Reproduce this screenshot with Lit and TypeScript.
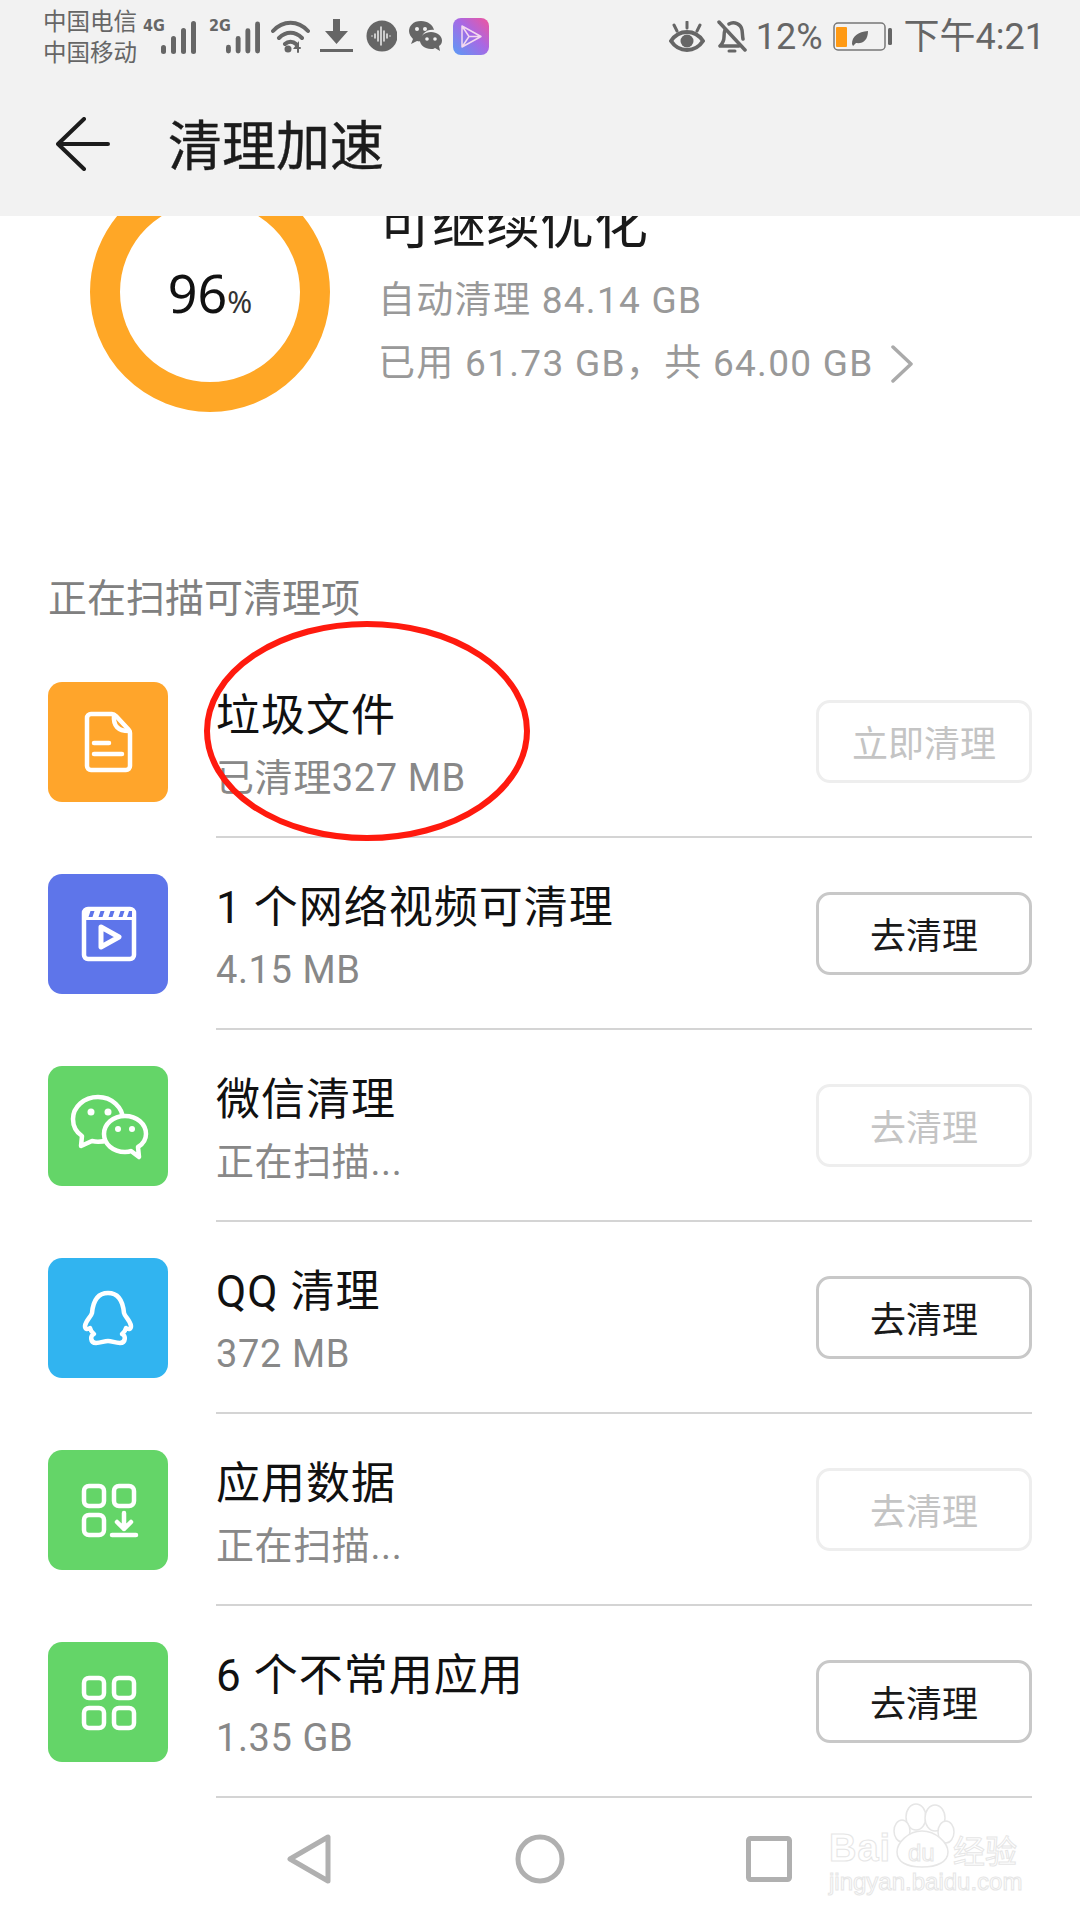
import {LitElement, html, svg, css} from 'lit';
import {customElement} from 'lit/decorators.js';

const signal = svg`<rect x="0" y="24" width="5" height="9" rx="2.5"/><rect x="10" y="15" width="5" height="18" rx="2.5"/><rect x="20" y="7" width="5" height="26" rx="2.5"/><rect x="30" y="0" width="5" height="33" rx="2.5"/>`;

const docIcon = svg`
	<path d="M43 32h21c2 0 3 1 4 2l13 14c1 1 1 2 1 3v33a4 4 0 0 1-4 4H43a4 4 0 0 1-4-4V36a4 4 0 0 1 4-4z"/>
	<path d="M66 33c-1 11 4 16 15 16"/>
	<path d="M46 61h15M46 72h28"/>`;

const videoIcon = svg`
	<rect x="36" y="35" width="50" height="50" rx="4"/>
	<rect x="36" y="35" width="50" height="11" fill="#fff" stroke="none"/>
	<path d="M40.500 43l2-6h4l-2 6zM50.500 43l2-6h4l-2 6zM60.500 43l2-6h4l-2 6zM70.500 43l2-6h4l-2 6zM79 43l2-6h3v6z" fill="#5e75ea" stroke="none"/>
	<path d="M53 53l18 10-18 10z" stroke-width="5"/>`;

const wechatIcon = svg`
	<path d="M50 31c-14 0-25 10-25 22 0 7 3 13 9 17l-1 10 11-5c2 .5 4 .7 6 .7 14 0 25-10 25-22S64 31 50 31z"/>
	<path d="M77 50c-12 0-21 8-21 18s9 18 21 18c2 0 4 0 6-1l8 6-1-10c5-3 8-8 8-13 0-10-9-18-21-18z" fill="#64d568"/>
	<g fill="#fff" stroke="none"><circle cx="43" cy="46" r="3.500"/><circle cx="60" cy="46" r="3.500"/><circle cx="70" cy="63" r="3"/><circle cx="84" cy="63" r="3"/></g>`;

const qqIcon = svg`<path d="M60 35C49 35 45 44 44 55 43 59 38 62 37 68 37 71 39 72 42 70 43 74 45 75 46 76 42 77 42 85 48 85 53 85 56 83 60 83 64 83 67 85 72 85 78 85 78 77 74 76 75 75 77 74 78 70 81 72 83 71 83 68 82 62 77 59 76 55 75 44 71 35 60 35Z"/>`;

const dataIcon = svg`
	<rect x="36" y="36" width="20" height="20" rx="5"/>
	<rect x="66" y="36" width="20" height="20" rx="5"/>
	<rect x="36" y="65" width="20" height="20" rx="5"/>
	<path d="M76 63v16M69 72l7 7 7-7M64 85h24"/>`;

const appsIcon = svg`
	<rect x="36" y="36" width="20" height="20" rx="5"/>
	<rect x="66" y="36" width="20" height="20" rx="5"/>
	<rect x="36" y="66" width="20" height="20" rx="5"/>
	<rect x="66" y="66" width="20" height="20" rx="5"/>`;

const rows = [
	{color: '#ffa52b', icon: docIcon, title: '垃圾文件', sub: '已清理327 MB', btn: '立即清理', off: true},
	{color: '#5e75ea', icon: videoIcon, title: '1 个网络视频可清理', sub: '4.15 MB', btn: '去清理', off: false},
	{color: '#64d568', icon: wechatIcon, title: '微信清理', sub: '正在扫描...', btn: '去清理', off: true},
	{color: '#31b4f0', icon: qqIcon, title: 'QQ 清理', sub: '372 MB', btn: '去清理', off: false},
	{color: '#64d568', icon: dataIcon, title: '应用数据', sub: '正在扫描...', btn: '去清理', off: true},
	{color: '#64d568', icon: appsIcon, title: '6 个不常用应用', sub: '1.35 GB', btn: '去清理', off: false},
];

@customElement('app-root')
export class AppRoot extends LitElement {
	static styles = css`
		* {
			margin: 0;
			padding: 0;
			box-sizing: border-box;
		}
		:host {
			display: flex;
			flex-direction: column;
			position: relative;
			width: 1080px;
			height: 1920px;
			overflow: hidden;
			background: #fff;
			font-family: Roboto, "Noto Sans CJK SC", sans-serif;
		}
		svg {
			display: block;
			flex: none;
		}

		.head {
			height: 216px;
			flex: none;
			background: #f2f2f2;
			position: relative;
			z-index: 1;
		}
		.status {
			height: 72px;
			display: flex;
			align-items: center;
			gap: 10px;
			padding: 0 35px 0 43px;
			color: #666;
		}
		.carrier {
			font-size: 23.5px;
			line-height: 31px;
			margin: 3px -4px 0 0;
			width: 94px;
		}
		.net {
			display: flex;
			width: 56px;
			height: 36px;
			align-items: flex-end;
			position: relative;
		}
		.net.second {
			width: 52px;
		}
		.net b {
			align-self: flex-start;
			font: bold 16px/16px "DejaVu Sans Condensed", sans-serif;
			width: 18px;
			flex: none;
		}
		.net svg {
			fill: #666;
		}
		.spring {
			flex: 1;
		}
		.right {
			display: flex;
			align-items: center;
			gap: 12px;
			margin-top: 2px;
		}
		.pct, .clock {
			font-size: 36px;
			line-height: 40px;
			white-space: nowrap;
		}
		.pct {
			margin: 0 -2px 0 -3px;
		}
		.toolbar {
			height: 144px;
			display: flex;
			align-items: center;
			gap: 58px;
			padding-left: 56px;
		}
		.toolbar h1 {
			font-size: 54px;
			font-weight: 400;
			line-height: 70px;
			color: #1c1c1c;
			margin-top: 8px;
			-webkit-text-stroke: 0.4px #1c1c1c;
		}

		.content {
			flex: 1;
			overflow: hidden;
			display: flex;
			flex-direction: column;
		}
		.hero {
			display: flex;
			gap: 48px;
			margin-top: -44px;
			padding-left: 90px;
		}
		.ring {
			position: relative;
			width: 240px;
			height: 240px;
			flex: none;
		}
		.ring span {
			position: absolute;
			inset: 0;
			display: flex;
			align-items: baseline;
			justify-content: center;
			padding-top: 85px;
			font-family: "Noto Sans", sans-serif;
			font-size: 52px;
			line-height: 72px;
			color: #111;
		}
		.ring small {
			font-size: 30px;
			color: #333;
		}
		.summary {
			padding-top: 24px;
		}
		.summary h2 {
			font-size: 54px;
			font-weight: 400;
			line-height: 60px;
			color: #1a1a1a;
			margin-bottom: 13px;
		}
		.summary p {
			display: flex;
			align-items: center;
			gap: 17px;
			font-size: 37px;
			line-height: 63px;
			color: #999;
			letter-spacing: 1.3px;
			white-space: nowrap;
		}
		.label {
			margin-top: 162px;
			padding-left: 48px;
			font-size: 39px;
			line-height: 50px;
			color: #808080;
		}
		.list {
			margin-top: 22px;
		}
		.row {
			display: flex;
			align-items: center;
			gap: 48px;
			height: 192px;
			padding: 0 48px;
		}
		.tile {
			width: 120px;
			height: 120px;
			flex: none;
			border-radius: 14px;
		}
		.tile svg {
			fill: none;
			stroke: #fff;
			stroke-width: 4.5;
			stroke-linecap: round;
			stroke-linejoin: round;
		}
		.body {
			flex: 1;
			height: 100%;
			display: flex;
			align-items: center;
			justify-content: space-between;
			border-bottom: 2px solid #d4d4d4;
		}
		.text {
			padding-top: 9px;
		}
		.text h3 {
			font-size: 44px;
			font-weight: 400;
			line-height: 56px;
			color: #111;
			letter-spacing: 1px;
		}
		.text p {
			font-size: 38px;
			line-height: 50px;
			margin-top: 9px;
			color: #888;
			letter-spacing: 0.6px;
		}
		.btn {
			width: 216px;
			height: 83px;
			display: flex;
			align-items: center;
			justify-content: center;
			border: 3px solid #c8c8c8;
			border-radius: 14px;
			font-size: 36px;
			color: #1a1a1a;
		}
		.btn.off {
			border-color: #eeeeee;
			color: #c4c4c4;
		}

		.nav {
			height: 122px;
			flex: none;
			display: flex;
			align-items: center;
			padding-left: 287px;
			gap: 184px;
		}
		.nav svg {
			fill: none;
			stroke: #b0b0b0;
			stroke-width: 5;
			stroke-linejoin: round;
		}
		.nav .square {
			margin-left: -3px;
		}

		.mark {
			position: absolute;
			left: 200px;
			top: 618px;
		}
		.watermark {
			position: absolute;
			left: 820px;
			top: 1795px;
			width: 210px;
			height: 110px;
			color: #fff;
			-webkit-text-stroke: 1px #e6e6e6;
		}
		.watermark svg {
			position: absolute;
			left: 0;
			top: 0;
			fill: #fff;
			stroke: #e6e6e6;
			stroke-width: 1.5;
		}
		.bai, .du, .jy, .exp {
			position: absolute;
			white-space: nowrap;
		}
		.bai {
			left: 9px;
			top: 37px;
			font: bold 38px/33px "Liberation Sans", sans-serif;
			letter-spacing: 1px;
		}
		.du {
			left: 88px;
			top: 48px;
			font: 24px/20px "Liberation Sans", sans-serif;
		}
		.exp {
			left: 133px;
			top: 38px;
			font: 32px/32px "Noto Sans CJK SC", sans-serif;
		}
		.jy {
			left: 9px;
			top: 75px;
			font: 24px/24px "Liberation Sans", sans-serif;
		}
	`;

	renderStatus() {
		return html`
			<div class="status">
				<div class="carrier">中国电信<br />中国移动</div>
				<div class="net">
					<b>4G</b>
					<svg width="35" height="33" viewBox="0 0 35 33">${signal}</svg>
				</div>
				<div class="net second">
					<b>2G</b>
					<svg width="34" height="33" viewBox="0 0 35 33" style="margin-left:-1px">${signal}</svg>
				</div>
				<svg width="39" height="33" viewBox="0 0 39 33" fill="none" stroke="#666" stroke-width="4" stroke-linecap="round">
					<path d="M2 11c10-11 25-11 35 0M8 18c7-7 16-7 23 0M14 24c3-3 8-3 11 0"/>
					<circle cx="17" cy="29" r="3.500" fill="#666" stroke="none"/>
					<path d="M27 32v-8l-3 4h5" stroke-width="2"/>
				</svg>
				<svg width="33" height="34" viewBox="0 0 33 34" fill="#666">
					<path d="M13 0h7v12h8L16.500 25 5 12h8z"/>
					<rect x="0" y="30" width="33" height="3"/>
				</svg>
				<svg width="34" height="32" viewBox="0 0 34 32">
					<circle cx="19" cy="16" r="15.500" fill="#666"/>
					<path d="M9 16v0M12 14v4M15 11v10M18 7v18M21 11v10M24 14v4M27 16v0" stroke="#eee" stroke-width="1.500" stroke-linecap="round"/>
				</svg>
				<svg width="36" height="30" viewBox="0 0 36 30" fill="#666">
					<path d="M14 0C6 0 2 5 2 10c0 3 2 6 4 8l-2 5 6-3c2 .6 4 .7 5 .6C13 13 20 8 27 9 26 4 21 0 14 0z"/>
					<path d="M24 11c-6 0-11 4-11 8.500S18 28 24 28c1 0 3 0 4-1l5 3-1-5c2-1 3-3 3-5.500C35 15 30 11 24 11z"/>
					<g fill="#f2f2f2"><circle cx="10" cy="8" r="2"/><circle cx="18" cy="8" r="2"/><circle cx="20" cy="18" r="1.800"/><circle cx="28" cy="18" r="1.800"/></g>
				</svg>
				<svg width="36" height="37" viewBox="0 0 36 37">
					<defs>
						<linearGradient id="play" x1="0" y1="1" x2="1" y2="0">
							<stop offset="0" stop-color="#5a9cf6" />
							<stop offset="0.55" stop-color="#a868e4" />
							<stop offset="1" stop-color="#f0559c" />
						</linearGradient>
					</defs>
					<rect width="36" height="37" rx="8" fill="url(#play)"/>
					<path d="M9 8l19 10.500L9 29zM9 8l7 10.500L9 29M16 18.500h12" fill="none" stroke="#f4d8f0" stroke-width="1.500" stroke-linejoin="round"/>
				</svg>
				<div class="spring"></div>
				<div class="right">
					<svg width="36" height="33" viewBox="0 0 36 33" fill="none" stroke="#666">
						<path d="M2 20c8-12 24-12 32 0-8 12-24 12-32 0z" stroke-width="4"/>
						<circle cx="18" cy="20" r="6.500" fill="#666" stroke="none"/>
						<path d="M18 1v6M5 4l3 6M31 4l-3 6" stroke-width="3" stroke-linecap="round"/>
					</svg>
					<svg width="30" height="34" viewBox="0 0 30 34" fill="none" stroke="#666" stroke-width="3.500" stroke-linecap="round" stroke-linejoin="round">
						<path d="M8 10c-1 2-1 4-1 7 0 4-2 7-4 9h19M12 4c5-3 12 0 13 6 .5 3 .5 7 1 9"/>
						<path d="M2 2l26 28"/>
						<path d="M12 31h6" stroke-width="3"/>
					</svg>
					<span class="pct">12%</span>
					<svg width="59" height="30" viewBox="0 0 59 30">
						<rect x="1" y="1" width="51" height="27" rx="4" fill="none" stroke="#777" stroke-width="1.500"/>
						<rect x="3" y="5" width="11" height="20" rx="1" fill="#ff9a14"/>
						<rect x="55" y="6" width="4" height="17" rx="1.500" fill="#666"/>
						<path d="M19 22c0-8 6-12 16-13 0 9-5 13-12 12l-3 3z" fill="#666"/>
					</svg>
					<span class="clock">下午4:21</span>
				</div>
			</div>
		`;
	}

	render() {
		return html`
			<div class="head">
				${this.renderStatus()}
				<div class="toolbar">
					<svg width="54" height="54" viewBox="0 0 54 54" fill="none" stroke="#1c1c1c" stroke-width="4" stroke-linecap="round" stroke-linejoin="round">
						<path d="M52 27H2M28 2L2 27l26 25"/>
					</svg>
					<h1>清理加速</h1>
				</div>
			</div>

			<div class="content">
				<div class="hero">
					<div class="ring">
						<svg width="240" height="240" viewBox="0 0 240 240">
							<circle cx="120" cy="120" r="105" fill="none" stroke="#ffa726" stroke-width="30"/>
						</svg>
						<span>96<small>%</small></span>
					</div>
					<div class="summary">
						<h2>可继续优化</h2>
						<p>自动清理 84.14 GB</p>
						<p>
							已用 61.73 GB，共 64.00 GB
							<svg width="22" height="38" viewBox="0 0 22 38" fill="none" stroke="#aaa" stroke-width="3.500" stroke-linecap="round" stroke-linejoin="round">
								<path d="M2 2l18 17L2 36"/>
							</svg>
						</p>
					</div>
				</div>

				<div class="label">正在扫描可清理项</div>

				<div class="list">
					${rows.map((r) => html`
						<div class="row">
							<div class="tile" style="background:${r.color}">
								<svg width="120" height="120" viewBox="0 0 120 120">${r.icon}</svg>
							</div>
							<div class="body">
								<div class="text">
									<h3>${r.title}</h3>
									<p>${r.sub}</p>
								</div>
								<div class="btn ${r.off ? 'off' : ''}">${r.btn}</div>
							</div>
						</div>
					`)}
				</div>
			</div>

			<div class="nav">
				<svg width="44" height="50" viewBox="0 0 44 50"><path d="M41 3v44L3 25z"/></svg>
				<svg width="50" height="50" viewBox="0 0 50 50"><circle cx="25" cy="25" r="22"/></svg>
				<svg class="square" width="46" height="46" viewBox="0 0 46 46"><rect x="2.500" y="2.500" width="41" height="41" rx="2"/></svg>
			</div>

			<svg class="mark" width="340" height="232" viewBox="0 0 340 232">
				<ellipse cx="167" cy="113" rx="160" ry="107" fill="none" stroke="#ff1a0e" stroke-width="6"/>
			</svg>

			<div class="watermark">
				<svg width="210" height="110" viewBox="0 0 210 110">
					<ellipse cx="96" cy="22" rx="10" ry="13"/>
					<ellipse cx="115" cy="23" rx="10" ry="13"/>
					<ellipse cx="82" cy="36" rx="8" ry="11"/>
					<ellipse cx="126" cy="37" rx="8" ry="11"/>
					<path d="M102 36c-14 0-25 12-25 21 0 10 10 15 25 15s26-5 26-15c0-9-12-21-26-21z"/>
				</svg>
				<span class="bai">Bai</span>
				<span class="du">du</span>
				<span class="exp">经验</span>
				<span class="jy">jingyan.baidu.com</span>
			</div>
		`;
	}
}
